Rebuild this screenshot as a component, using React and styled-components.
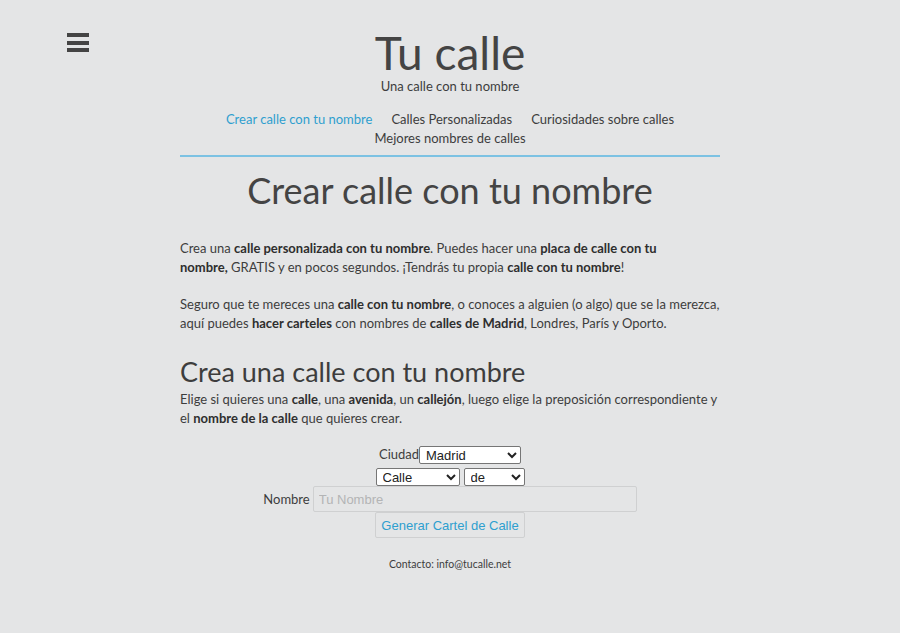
import React from "react";
import styled, { createGlobalStyle } from "styled-components";

const GlobalStyle = createGlobalStyle`
  html, body {
    margin: 0;
    padding: 0;
    background: #e4e5e6;
  }
  body {
    font-family: Lato, "Open Sans", sans-serif;
    color: #3d3d3d;
  }
`;

const Page = styled.div`
  position: relative;
  min-height: 633px;
  padding-top: 26px;
`;

const MenuButton = styled.button`
  position: absolute;
  left: 67px;
  top: 33px;
  width: 23px;
  height: 19px;
  padding: 0;
  border: 0;
  background: transparent;
  display: flex;
  flex-direction: column;
  justify-content: space-between;
  cursor: pointer;

  span {
    display: block;
    height: 4px;
    width: 22px;
    background: #444;
  }
`;

const Wrapper = styled.div`
  width: 540px;
  margin: 0 auto;
`;

const Header = styled.header`
  text-align: center;
`;

const SiteTitle = styled.div`
  font-size: 46px;
  line-height: 54px;
  font-weight: 400;
  color: #444;
`;

const Tagline = styled.div`
  font-size: 13px;
  line-height: 16px;
  margin-top: -2px;
`;

const Nav = styled.nav`
  margin-top: 16px;
  padding-bottom: 7px;
  border-bottom: 2px solid #7cc2e3;
  display: flex;
  flex-wrap: wrap;
  justify-content: center;
  column-gap: 19px;
`;

const NavLink = styled.a`
  font-size: 13px;
  line-height: 19px;
  color: ${(p) => (p.$active ? "#2f9fcf" : "#3d3d3d")};
  text-decoration: none;
`;

const PageTitle = styled.h1`
  margin: 11px 0 27px;
  font-size: 36px;
  line-height: 44px;
  font-weight: 400;
  text-align: center;
  color: #444;
`;

const Para = styled.p`
  margin: 0 0 18px;
  font-size: 13px;
  line-height: 19px;

  b {
    font-weight: 700;
    color: #2e2e2e;
  }
`;

const SectionTitle = styled.h2`
  margin: 23px 0 2px;
  font-size: 27px;
  line-height: 32px;
  font-weight: 400;
  color: #3d3d3d;
`;

const Form = styled.form`
  margin-top: 10px;
  display: flex;
  flex-direction: column;
  align-items: center;
  font-size: 13px;
`;

const FormRow = styled.div`
  display: flex;
  align-items: ${(p) => (p.$center ? "center" : "flex-start")};
  justify-content: center;
  gap: ${(p) => p.$gap || 0}px;
  margin-bottom: ${(p) => p.$mb ?? 3}px;
`;

const Label = styled.label`
  font-size: 13px;
  line-height: 16px;
`;

const Select = styled.select`
  width: ${(p) => p.$w}px;
  height: 18px;
  font-family: "Liberation Sans", Arial, sans-serif;
  font-size: 13px;
  color: #222;
  background: #fff;
  border: 1px solid #767676;
  border-radius: 2px;
  padding: 0 0 0 2px;
`;

const TextInput = styled.input`
  width: 324px;
  height: 26px;
  box-sizing: border-box;
  margin-left: 3px;
  padding: 0 5px;
  font-family: "Liberation Sans", Arial, sans-serif;
  font-size: 13px;
  background: #e4e5e6;
  border: 1px solid #cfd0d1;
  border-radius: 2px;
  &::placeholder {
    color: #b3b4b5;
  }
`;

const SubmitButton = styled.button`
  width: 150px;
  height: 26px;
  padding: 0 2px;
  white-space: nowrap;
  font-family: "Liberation Sans", Arial, sans-serif;
  font-size: 13px;
  color: #2f9fcf;
  background: #e4e5e6;
  border: 1px solid #cfd0d1;
  border-radius: 2px;
`;

const Footer = styled.footer`
  margin-top: 20px;
  text-align: center;
  font-size: 10.5px;
`;

export default function App() {
  return (
    <>
      <GlobalStyle />
      <Page>
        <MenuButton aria-label="menu">
          <span />
          <span />
          <span />
        </MenuButton>
        <Wrapper>
          <Header>
            <SiteTitle>Tu calle</SiteTitle>
            <Tagline>Una calle con tu nombre</Tagline>
            <Nav>
              <NavLink $active href="#">Crear calle con tu nombre</NavLink>
              <NavLink href="#">Calles Personalizadas</NavLink>
              <NavLink href="#">Curiosidades sobre calles</NavLink>
              <NavLink href="#">Mejores nombres de calles</NavLink>
            </Nav>
          </Header>

          <PageTitle>Crear calle con tu nombre</PageTitle>

          <Para>
            Crea una <b>calle personalizada con tu nombre</b>. Puedes hacer una{" "}
            <b>placa de calle con tu</b>
            <br />
            <b>nombre,</b> GRATIS y en pocos segundos. ¡Tendrás tu propia{" "}
            <b>calle con tu nombre</b>!
          </Para>
          <Para>
            Seguro que te mereces una <b>calle con tu nombre</b>, o conoces a
            alguien (o algo) que se la merezca, aquí puedes{" "}
            <b>hacer carteles</b> con nombres de <b>calles de Madrid</b>,
            Londres, París y Oporto.
          </Para>

          <SectionTitle>Crea una calle con tu nombre</SectionTitle>
          <Para>
            Elige si quieres una <b>calle</b>, una <b>avenida</b>, un{" "}
            <b>callejón</b>, luego elige la preposición correspondiente y el{" "}
            <b>nombre de la calle</b> que quieres crear.
          </Para>

          <Form onSubmit={(e) => e.preventDefault()}>
            <FormRow $mb={4}>
              <Label>Ciudad</Label>
              <Select $w={102} defaultValue="Madrid">
                <option>Madrid</option>
                <option>Londres</option>
                <option>París</option>
                <option>Oporto</option>
              </Select>
            </FormRow>
            <FormRow $gap={4} $mb={0}>
              <Select $w={84} defaultValue="Calle">
                <option>Calle</option>
                <option>Avenida</option>
                <option>Callejón</option>
              </Select>
              <Select $w={61} defaultValue="de">
                <option>de</option>
                <option>del</option>
                <option>de la</option>
              </Select>
            </FormRow>
            <FormRow $center $mb={0}>
              <Label>Nombre</Label>
              <TextInput placeholder="Tu Nombre" />
            </FormRow>
            <SubmitButton type="submit">Generar Cartel de Calle</SubmitButton>
          </Form>

          <Footer>Contacto: info@tucalle.net</Footer>
        </Wrapper>
      </Page>
    </>
  );
}
